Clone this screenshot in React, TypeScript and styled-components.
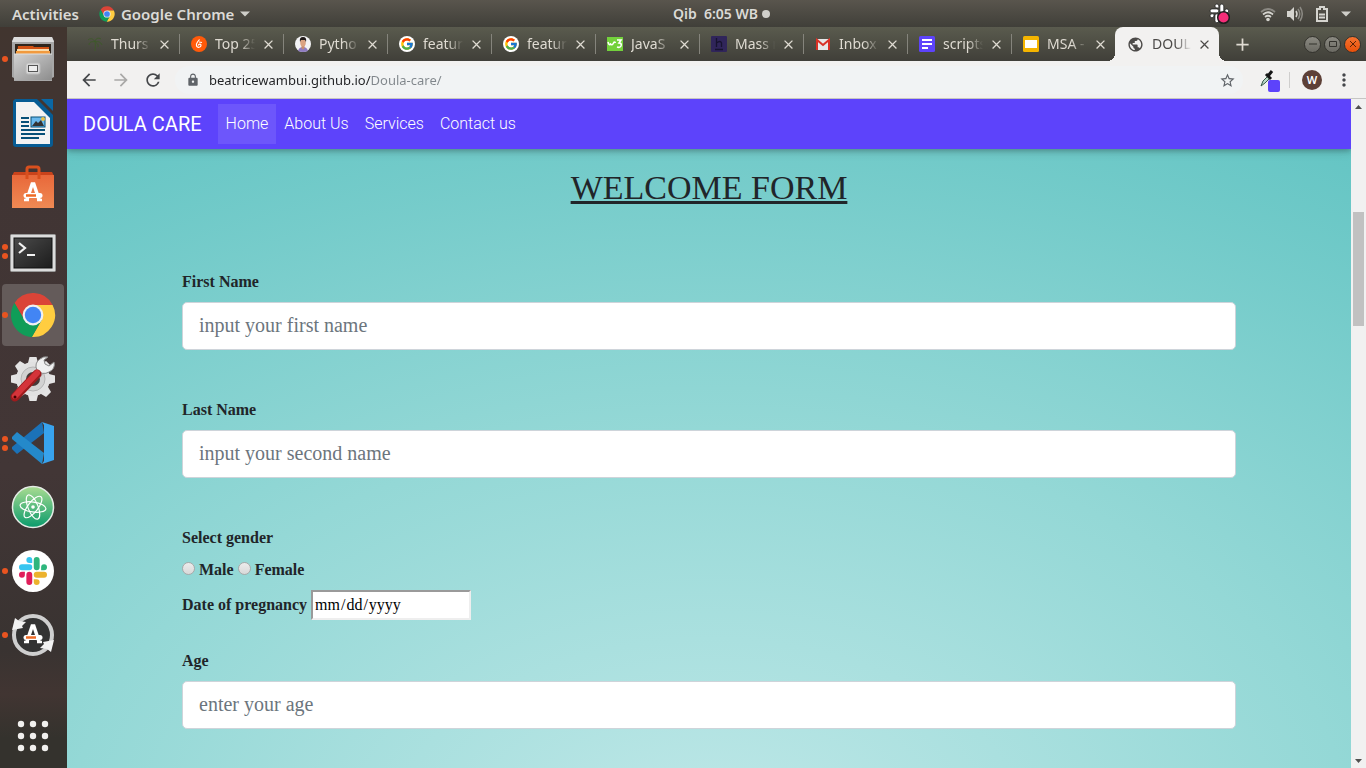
import React from "react";
import styled, { createGlobalStyle } from "styled-components";
import { FcGoogle } from "react-icons/fc";
import { MdArrowBack, MdArrowForward, MdRefresh, MdLock, MdStarBorder, MdMoreVert, MdPublic, MdClose, MdAdd } from "react-icons/md";

const ui = '"Noto Sans", "Open Sans", sans-serif';
const serif = '"Liberation Serif", "Times New Roman", serif';

const GlobalStyle = createGlobalStyle`
  *, *::before, *::after { box-sizing: border-box; }
  body { margin: 0; background: #3f3535; font-family: ${ui}; }
  button { border: 0; padding: 0; background: none; color: inherit; font: inherit; }
  svg { display: block; flex: none; }
`;

/* ---------- desktop shell ---------- */

const Desktop = styled.div`
  display: grid;
  grid-template: auto minmax(0, 1fr) / 67px minmax(0, 1fr);
  height: 100vh;
  overflow: hidden;
`;

const TopBar = styled.header`
  grid-column: 1 / -1;
  display: grid;
  grid-template-columns: 1fr auto 1fr;
  align-items: center;
  height: 27px;
  padding: 0 15px 0 12px;
  background: linear-gradient(#59554d, #403f39);
  color: #dbdad6;
  font-size: 15px;
  font-weight: 600;
`;

const TopGroup = styled.div<{ $gap: number; $end?: boolean }>`
  display: flex;
  align-items: center;
  justify-content: ${(p) => (p.$end ? "flex-end" : "flex-start")};
  gap: ${(p) => p.$gap}px;
`;

const TopButton = styled.button`
  display: flex;
  align-items: center;
  gap: 6px;
  line-height: 20px;
  white-space: nowrap;
`;

const ActivitiesButton = styled(TopButton)`
  margin-right: 14px;
`;

const Clock = styled(TopButton)`
  margin-left: 80px;
  gap: 4px;
  font-size: 14px;
  white-space: pre;
`;

const StatusDot = styled.span`
  width: 8px;
  height: 8px;
  border-radius: 50%;
  background: #cfcec9;
`;

const SlackStatus = styled.button`
  margin-right: 18px;
`;

const Dock = styled.nav`
  display: flex;
  flex-direction: column;
  min-height: 0;
  background: linear-gradient(#41352f 0, #413534 20%, #423636 60%, #393331 84%, #413532 90%, #34322d 96%);
`;

const DockItem = styled.button<{ $active?: boolean }>`
  display: grid;
  grid-template-columns: 6px 50px 6px;
  align-items: center;
  justify-items: center;
  width: 62px;
  height: 62px;
  margin: 1px 2px;
  border-radius: 4px;
  background: ${(p) => (p.$active ? "#645b5a" : "transparent")};
`;

const DockSpacer = styled.div`
  flex: 1;
`;

const Dots = styled.span`
  display: grid;
  gap: 3px;
  i {
    width: 6px;
    height: 6px;
    border-radius: 50%;
    background: #e95420;
  }
`;

/* ---------- browser ---------- */

const Browser = styled.section`
  display: flex;
  flex-direction: column;
  min-width: 0;
  min-height: 0;
`;

const TabStrip = styled.div`
  display: flex;
  align-items: center;
  height: 34px;
  flex: none;
  padding: 0 5px 0 8px;
  background: linear-gradient(#5a5b4e, #403f39);
`;

const TabItem = styled.div<{ $active?: boolean; $last?: boolean }>`
  position: relative;
  display: flex;
  align-items: center;
  flex: 0 1 104px;
  min-width: 0;
  height: 34px;
  padding: 0 7px 0 12px;
  border-radius: 8px 8px 0 0;
  color: ${(p) => (p.$active ? "#4c4a48" : "#dfdbd2")};
  background: ${(p) => (p.$active ? "#f2f1f0" : "transparent")};
  &::before {
    content: "";
    display: ${(p) => (p.$active ? "block" : "none")};
    position: absolute;
    right: -8px;
    bottom: 0;
    left: -8px;
    height: 8px;
    background:
      radial-gradient(circle at 0 0, transparent 8px, #f2f1f0 8px) left / 8px 8px no-repeat,
      radial-gradient(circle at 100% 0, transparent 8px, #f2f1f0 8px) right / 8px 8px no-repeat;
  }
  &::after {
    content: "";
    flex: none;
    width: 1px;
    height: 20px;
    margin-right: -8px;
    margin-left: 7px;
    background: ${(p) => (p.$active || p.$last ? "transparent" : "#85847c")};
  }
`;

const TabTitle = styled.button`
  flex: 1;
  min-width: 0;
  margin: 0 4px 0 8px;
  overflow: hidden;
  text-align: left;
  white-space: nowrap;
  font-size: 14px;
  line-height: 20px;
  mask-image: linear-gradient(90deg, #000 60%, transparent 98%);
`;

const IconButton = styled.button<{ $size: number; $color?: string }>`
  display: grid;
  place-items: center;
  flex: none;
  width: ${(p) => p.$size}px;
  height: ${(p) => p.$size}px;
  color: ${(p) => p.$color || "inherit"};
`;

const GoogleBadge = styled.span`
  display: grid;
  place-items: center;
  width: 16px;
  height: 16px;
  border-radius: 50%;
  background: #fff;
`;

const WindowControls = styled.div`
  display: flex;
  gap: 3px;
  margin-left: auto;
`;

const WindowButton = styled.button<{ $close?: boolean }>`
  display: grid;
  place-items: center;
  width: 17px;
  height: 17px;
  border: 1px solid #34332e;
  border-radius: 50%;
  background: ${(p) => (p.$close ? "linear-gradient(#f7732f, #e9500a)" : "linear-gradient(#8b8a82, #6b6a63)")};
`;

const Toolbar = styled.div`
  display: flex;
  align-items: center;
  height: 38px;
  flex: none;
  padding: 0 12px 0 6px;
  border-bottom: 1px solid #c6c5c4;
  background: #f2f1f0;
`;

const ToolButtons = styled.div`
  display: flex;
`;

const Omnibox = styled.div`
  display: flex;
  align-items: center;
  flex: 1;
  min-width: 0;
  height: 28px;
  margin: 0 14px 0 6px;
  padding: 0 8px 0 11px;
  border-radius: 14px;
  background: #f1f3f4;
  color: #5f6368;
`;

const Url = styled.input`
  flex: 1;
  min-width: 0;
  height: 20px;
  margin-left: 9px;
  padding: 0;
  border: 0;
  outline: 0;
  font-family: ${ui};
  font-size: 13px;
  color: transparent;
  background: linear-gradient(90deg, #202124 162px, #80868b 162px);
  background-clip: text;
`;

const Divider = styled.span`
  width: 1px;
  height: 16px;
  margin: 0 12px 0 8px;
  background: #cfcecd;
`;

const Avatar = styled.button`
  width: 20px;
  height: 20px;
  margin-right: 12px;
  border-radius: 50%;
  background: #5d4037;
  color: #fff;
  font-size: 11px;
  font-weight: 600;
  line-height: 20px;
`;

/* ---------- web page ---------- */

const Viewport = styled.div`
  display: flex;
  flex: 1;
  min-height: 0;
`;

const Page = styled.div`
  flex: 1;
  min-width: 0;
  overflow: hidden;
  background: radial-gradient(ellipse 100% 125% at 50% 112%, #c0e8e8 0%, #94d8d6 50%, #62c4c3 100%);
`;

const NavBar = styled.nav`
  display: flex;
  align-items: center;
  height: 50px;
  padding: 0 16px;
  background: #5d43fb;
  box-shadow: 0 2px 5px rgba(0, 0, 0, 0.2), 0 2px 10px rgba(0, 0, 0, 0.16);
  font-family: Roboto, sans-serif;
`;

const Brand = styled.a`
  margin-right: 16px;
  color: #fff;
  font-size: 20px;
  line-height: 30px;
  text-decoration: none;
`;

const NavLink = styled.a<{ $active?: boolean }>`
  padding: 8px;
  background: ${(p) => (p.$active ? "rgba(255, 255, 255, 0.1)" : "transparent")};
  color: #fff;
  font-size: 16px;
  font-weight: 300;
  line-height: 24px;
  text-decoration: none;
`;

const WelcomeForm = styled.form`
  padding: 16px 115px 48px;
  color: #212529;
  font-family: ${serif};
  font-size: 16px;
  font-weight: 700;
  line-height: 24px;
`;

const Heading = styled.h1`
  margin: 0 0 60px;
  font-size: 34px;
  font-weight: 400;
  line-height: 45px;
  text-align: center;
  text-decoration: underline;
  text-decoration-thickness: 3px;
`;

const Field = styled.div`
  display: flex;
  flex-direction: column;
  gap: 8px;
  margin-bottom: 48px;
`;

const TextInput = styled.input`
  height: 48px;
  padding: 8px 16px 10px;
  border: 1px solid #ced4da;
  border-radius: 5px;
  background: #fff;
  color: #495057;
  font-family: ${serif};
  font-size: 20px;
  &::placeholder { color: #6c757d; opacity: 1; }
`;

const GenderGroup = styled.fieldset`
  margin: 0 0 8px;
  padding: 0;
  border: 0;
  legend { margin-bottom: 8px; padding: 0; }
`;

const Choices = styled.div`
  display: flex;
  gap: 4px;
  label { display: flex; gap: 4px; }
`;

const Radio = styled.input`
  appearance: none;
  width: 13px;
  height: 13px;
  margin: 4px 0 0;
  border: 1px solid #a9a9a9;
  border-radius: 50%;
  background: linear-gradient(#ececec, #d9d9d9);
`;

const DateRow = styled.div`
  display: flex;
  align-items: center;
  gap: 4px;
  margin-bottom: 29px;
`;

const DateInput = styled.input`
  width: 160px;
  height: 30px;
  padding: 1px;
  border: 2px solid;
  border-color: #9a9a9a #eee #eee #9a9a9a;
  background: #fff;
  color: #000;
  font-family: ${serif};
  font-size: 16px;
  &::-webkit-calendar-picker-indicator { display: none; }
  &::-webkit-datetime-edit-fields-wrapper { padding: 0; }
`;

const ScrollBar = styled.div`
  display: flex;
  flex-direction: column;
  align-items: center;
  justify-content: space-between;
  width: 15px;
  background: #f1f1f1;
`;

const ScrollTrack = styled.div`
  display: flex;
  flex: 1;
  flex-direction: column;
  width: 11px;
  &::before { content: ""; flex: 98 0 0; }
  &::after { content: ""; flex: 427 0 0; }
`;

const ScrollThumb = styled.div`
  flex: 114 0 0;
  background: #c1c1c1;
`;

/* ---------- icons ---------- */

const ChromeIcon = ({ size }: { size: number }) => (
  <svg width={size} height={size} viewBox="1 1 46 46">
    <path fill="#db4437" d="M5.54 12.03A22 22 0 0 1 43.6 14H24L15.34 29Z" />
    <path fill="#ffcd40" d="M43.6 14A22 22 0 0 1 22.86 45.97L32.66 29 24 14Z" />
    <path fill="#0f9d58" d="M22.86 45.97A22 22 0 0 1 5.54 12.03L15.34 29H32.66Z" />
    <circle cx="24" cy="24" r="10.4" fill="#f1f1f1" />
    <circle cx="24" cy="24" r="8.2" fill="#4285f4" />
  </svg>
);

const slackArm =
  "M5.04 15.17a2.52 2.52 0 1 1-2.52-2.52h2.52zM6.31 15.17a2.52 2.52 0 0 1 5.04 0v6.31a2.52 2.52 0 0 1-5.04 0z";

const SlackMark = ({ colors }: { colors: string[] }) => (
  <>
    {colors.map((c, i) => (
      <path key={i} d={slackArm} fill={c} transform={`rotate(${i * 90} 12 12)`} />
    ))}
  </>
);

/* Compass-like emblem shared by the software and updater icons, centred on 0,0. */
const Emblem = () => (
  <g fill="none" stroke="#fff">
    <path d="M-6 7.500-.8-8H.8L6 7.500" strokeWidth="3.500" />
    <path d="M-9 8h5M4 8h5" strokeWidth="2.500" />
    <path d="M-7 3.500H7" strokeWidth="5" strokeLinecap="round" />
    <path d="M-7 3.500H3" stroke="#ee6a25" strokeWidth="2.500" />
  </g>
);

const Caret = () => (
  <svg width="10" height="6" viewBox="0 0 10 6"><path d="M0 .5h10L5 5.500Z" fill="#cfcec9" /></svg>
);

const FilesIcon = () => (
  <svg width="44" height="46" viewBox="0 0 44 46">
    <defs><linearGradient id="cab" x2="1" y2="1"><stop stopColor="#d2d2d2" /><stop offset="1" stopColor="#8d8d8d" /></linearGradient></defs>
    <path d="M3 1h38l2 4v36l-2 1v3H3v-3l-2-1V5Z" fill="#a7a7a7" />
    <path d="M3 1h38l2 5H1Z" fill="#dcdcdc" />
    <path d="M4 8h36v11H4Z" fill="#30261d" />
    <path d="M7 10h15l1 1h15v8H6Z" fill="#d15113" />
    <path d="M6 13h32v2H6Z" fill="#f8dcae" /><path d="M5 15h34v4H5Z" fill="#f19a3e" />
    <path d="M3 18h38v26H3Z" fill="url(#cab)" /><path d="M3 18h38" stroke="#e0e0e0" />
    <rect x="15" y="27" width="14" height="11" rx="2" fill="#d8d8d8" stroke="#bbb" />
    <rect x="17.500" y="29.500" width="9" height="6" fill="#eee" stroke="#555" />
  </svg>
);

const WriterIcon = () => (
  <svg width="42" height="50" viewBox="0 0 42 50">
    <path d="M3 1h22l16 16v29a3 3 0 0 1-3 3H4a3 3 0 0 1-3-3V3Z" fill="#075c94" />
    <path d="M4 4h18l16 16v26H4Z" fill="#f3f3f3" />
    <path d="M29 1h12v12Z" fill="#0a67a4" />
    <path d="M9 20h8M9 24h8M9 28h8M9 32h24M9 36h24M9 40h18" stroke="#075078" strokeWidth="2" />
    <rect x="19" y="19" width="14" height="10" fill="#69b8ec" stroke="#075078" />
    <circle cx="31" cy="21" r="2" fill="#e9c044" />
    <path d="m20 28 4-5 2 2 3-3 3 6Z" fill="#333" />
  </svg>
);

const SoftwareIcon = () => (
  <svg width="44" height="46" viewBox="0 0 44 46">
    <defs><linearGradient id="bag" x2="0" y2="1"><stop stopColor="#e8683a" /><stop offset="1" stopColor="#f08a54" /></linearGradient></defs>
    <path d="M3 8h38l2 4H1Z" fill="#c9431b" />
    <path d="M1 11h42v33H1Z" fill="url(#bag)" />
    <path d="M16 15V5q0-2 2-2h8q2 0 2 2v10" fill="none" stroke="#d9501e" strokeWidth="3" />
    <g transform="translate(22 28)"><Emblem /></g>
  </svg>
);

const TerminalIcon = () => (
  <svg width="46" height="42" viewBox="0 -4 46 42">
    <defs><linearGradient id="term" x2="1" y2="1"><stop stopColor="#4b4b4b" /><stop offset=".5" stopColor="#333" /><stop offset="1" stopColor="#1c1c1c" /></linearGradient></defs>
    <rect x=".5" y=".5" width="45" height="37" rx="1" fill="#dcdcdc" stroke="#999" />
    <rect x="4" y="4" width="38" height="30" fill="url(#term)" stroke="#111" />
    <path d="m9 9 6 5-6 5M17 21h8" fill="none" stroke="#f2f2f2" strokeWidth="2.200" />
  </svg>
);

const SettingsIcon = () => (
  <svg width="46" height="46" viewBox="0 0 46 46">
    {[0, 45, 90, 135].map((a) => (
      <path key={a} d="M19.500 1h7l2 8v28l-2 8h-7l-2-8V9Z" fill="#e4e4e4" transform={`rotate(${a} 23 23)`} />
    ))}
    <circle cx="23" cy="23" r="17" fill="#e1e1e1" />
    <circle cx="23" cy="23" r="12" fill="#d2d2d2" stroke="#b5b5b5" />
    <circle cx="23" cy="23" r="7" fill="#453a39" />
    <path d="m27 20 8-9" stroke="#b5b5b5" strokeWidth="7" />
    <path d="M30 3a8 8 0 0 0-3 11 9 9 0 0 0 12 2 8 8 0 0 0 5-10l-5 4-4-2-1-4 4-3a9 9 0 0 0-8 2Z" fill="#f0f0f0" stroke="#888" />
    <path d="M5 41 27 18" stroke="#9e1b1d" strokeWidth="9" strokeLinecap="round" />
    <path d="M5 40 27 17" stroke="#d4343a" strokeWidth="6" strokeLinecap="round" />
    <circle cx="5" cy="41" r="1.500" fill="#400" />
  </svg>
);

const CodeIcon = () => (
  <svg width="44" height="44" viewBox="0 0 44 44">
    <path d="M1 28v-2L31 1l2 11L6 33Z" fill="#1b72b8" />
    <path d="m1 16 5-5 27 21-2 11L1 18Z" fill="#2489ca" />
    <path d="m31 1 12 4v34l-12 4 2-3V4Z" fill="#38a3ee" />
  </svg>
);

const AtomIcon = () => (
  <svg width="44" height="44" viewBox="0 0 44 44">
    <defs><linearGradient id="atom" x2="0" y2="1"><stop stopColor="#a9dc91" /><stop offset="1" stopColor="#0a9b6c" /></linearGradient></defs>
    <circle cx="22" cy="22" r="20.500" fill="url(#atom)" stroke="#e5ece6" strokeWidth="1.500" />
    <g fill="none" stroke="#fff" strokeWidth="1.200">
      <ellipse cx="22" cy="22" rx="13" ry="5" transform="rotate(8 22 22)" />
      <ellipse cx="22" cy="22" rx="13" ry="5" transform="rotate(68 22 22)" />
      <ellipse cx="22" cy="22" rx="13" ry="5" transform="rotate(128 22 22)" />
    </g>
    <circle cx="22" cy="22" r="1.800" fill="#fff" />
  </svg>
);

const SlackIcon = () => (
  <svg width="42" height="42" viewBox="0 0 42 42">
    <circle cx="21" cy="21" r="21" fill="#fff" />
    <g transform="translate(7 7) scale(1.167)"><SlackMark colors={["#e01e5a", "#36c5f0", "#2eb67d", "#ecb22e"]} /></g>
  </svg>
);

const UpdaterIcon = () => (
  <svg width="44" height="46" viewBox="0 0 44 46">
    <circle cx="22" cy="23" r="19" fill="#333" stroke="#cfcfcf" strokeWidth="4" />
    <path d="M1 18 4 6l4 3 7 1-4 4 1 2Z" fill="#f2f2f2" />
    <path d="m43 28-3 12-4-3-7-1 4-4-1-2Z" fill="#f2f2f2" />
    <g transform="translate(22 22)"><Emblem /></g>
  </svg>
);

const AppsIcon = () => (
  <svg width="32" height="32" viewBox="0 0 32 32" fill="#f1f0ee">
    {[4, 16, 28].flatMap((x) => [4, 16, 28].map((y) => <circle key={`${x}-${y}`} cx={x} cy={y} r="3.200" />))}
  </svg>
);

const palm = (
  <svg width="16" height="16" viewBox="0 0 16 16" fill="none" stroke="#3f5a2b" strokeWidth="1">
    <path d="M8 15c0-4 1-5 0-8M8 6C6 2 3 2 1 4M8 6C5 5 2 6 2 9M8 6c0-3 3-5 6-3M8 6c3-1 6 0 7 3M8 6c2 1 4 3 3 5" />
  </svg>
);
const orangeDisc = (
  <svg width="16" height="16" viewBox="0 0 16 16"><circle cx="8" cy="8" r="8" fill="#ff5a0a" />
    <path d="M8.500 3.500 6.500 6C5 8 5 9 5.500 10c1 2 4.500 1.500 4.500-.5S8 8 7 9.500M8 6l3 .5" fill="none" stroke="#fff" strokeWidth="1.200" /></svg>
);
const portrait = (
  <svg width="16" height="16" viewBox="0 0 16 16"><circle cx="8" cy="8" r="8" fill="#f3f3f5" />
    <path d="M3 15q1-4 5-4t5 4q-5 2-10 0Z" fill="#8f7cc0" /><path d="M6.500 9h3v3L8 13.500 6.500 12Z" fill="#c98d6c" />
    <ellipse cx="8" cy="6.500" rx="2.800" ry="4" fill="#dba382" /><path d="M5 6Q4 1 8 1t3 5L10 4H6Z" fill="#211a19" /></svg>
);
const google = <GoogleBadge><FcGoogle size={14} /></GoogleBadge>;
const schools = (
  <svg width="16" height="14" viewBox="0 0 16 14"><path d="M0 0h16v14H0Z" fill="#73d13c" />
    <path d="M1 5q1 4 2.500 2Q5 9 6.500 6q1-2 2 0M10 3h4l-2 3q3 0 2 3-1 2-4 1" fill="none" stroke="#fff" strokeWidth="1.600" /></svg>
);
const purpleH = (
  <svg width="16" height="16" viewBox="0 0 16 16"><rect width="16" height="16" rx="1" fill="#30255a" />
    <path d="M5.500 2v9M5.500 7q4-3 5 0v4M4 13.500h8" fill="none" stroke="#17132f" strokeWidth="1.300" /></svg>
);
const gmail = (
  <svg width="16" height="16" viewBox="0 0 16 16"><path d="M1 3h14v11H1Z" fill="#e7e7e7" />
    <path d="M2 14V4l6 5 6-5v10" fill="none" stroke="#d93025" strokeWidth="2" /></svg>
);
const docs = (
  <svg width="16" height="16" viewBox="0 0 16 16"><rect width="16" height="16" rx="1.500" fill="#5d43fb" />
    <path d="M3 4h10M3 8h10M3 12h6" stroke="#fff" strokeWidth="2" /></svg>
);
const slides = (
  <svg width="16" height="16" viewBox="0 0 16 16"><rect width="16" height="16" rx="1.500" fill="#f4b400" /><path d="M2 4h12v8H2Z" fill="#fff" /></svg>
);

const tabs = [
  { title: "Thurs", icon: palm },
  { title: "Top 25", icon: orangeDisc },
  { title: "Pytho", icon: portrait },
  { title: "featur", icon: google },
  { title: "featur", icon: google },
  { title: "JavaS", icon: schools },
  { title: "Mass r", icon: purpleH },
  { title: "Inbox", icon: gmail },
  { title: "scripts", icon: docs },
  { title: "MSA -", icon: slides },
  { title: "DOUL", icon: <MdPublic size={17} />, active: true },
];

const dockApps = [
  { name: "Files", icon: <FilesIcon />, windows: 1 },
  { name: "Writer", icon: <WriterIcon />, windows: 0 },
  { name: "Software", icon: <SoftwareIcon />, windows: 0 },
  { name: "Terminal", icon: <TerminalIcon />, windows: 2 },
  { name: "Chrome", icon: <ChromeIcon size={46} />, windows: 1, active: true },
  { name: "Settings", icon: <SettingsIcon />, windows: 0 },
  { name: "Code", icon: <CodeIcon />, windows: 2 },
  { name: "Atom", icon: <AtomIcon />, windows: 0 },
  { name: "Slack", icon: <SlackIcon />, windows: 1 },
  { name: "Updater", icon: <UpdaterIcon />, windows: 1 },
];

const TextField = ({ id, label, placeholder }: { id: string; label: string; placeholder: string }) => (
  <Field>
    <label htmlFor={id}>{label}</label>
    <TextInput id={id} type="text" placeholder={placeholder} />
  </Field>
);

const ScrollArrow = ({ down }: { down?: boolean }) => (
  <IconButton $size={15} aria-label={down ? "Scroll down" : "Scroll up"}>
    <svg width="7" height="4" viewBox="0 0 7 4"><path d={down ? "M0 0h7L3.500 4Z" : "M0 4h7L3.500 0Z"} fill="#505050" /></svg>
  </IconButton>
);

export default function App() {
  return (
    <>
      <GlobalStyle />
      <Desktop>
        <TopBar>
          <TopGroup $gap={6}>
            <ActivitiesButton>Activities</ActivitiesButton>
            <TopButton><ChromeIcon size={16} />Google Chrome<Caret /></TopButton>
          </TopGroup>
          <Clock>{"Qib  6:05 WB"}<StatusDot /></Clock>
          <TopGroup $gap={11} $end>
            <SlackStatus aria-label="Slack">
              <svg width="22" height="22" viewBox="0 0 22 22">
                <g transform="translate(1 1) scale(.78)" stroke="#222" strokeWidth="1"><SlackMark colors={["#fff", "#fff", "#fff", "#fff"]} /></g>
                <circle cx="14.500" cy="14.500" r="5.800" fill="#f62d78" stroke="#1e1e1e" strokeWidth="1.500" />
              </svg>
            </SlackStatus>
            <svg width="16" height="16" viewBox="0 0 16 16" fill="none" strokeWidth="1.700">
              <path d="M1 6q7-6 14 0" stroke="#8b8983" /><path d="M3 8.500q5-4.500 10 0M5 11q3-2.500 6 0" stroke="#d5d4cf" />
              <circle cx="8" cy="13.500" r="1.800" fill="#d5d4cf" />
            </svg>
            <svg width="16" height="16" viewBox="0 0 16 16" fill="none" strokeWidth="1.500">
              <path d="M0 5h3l4-4v14l-4-4H0Z" fill="#d5d4cf" /><path d="M9 5q2 3 0 6" stroke="#d5d4cf" />
              <path d="M11 3q3.500 5 0 10M13 1q4.500 7 0 14" stroke="#8b8983" />
            </svg>
            <svg width="16" height="18" viewBox="0 0 16 18" fill="none" stroke="#d5d4cf" strokeWidth="2">
              <path d="M3 4h3V2h4v2h3v12H3Z" /><path d="M5 9.500h6M5 12.500h6" />
            </svg>
            <Caret />
          </TopGroup>
        </TopBar>

        <Dock aria-label="Dock">
          {dockApps.map((a) => (
            <DockItem key={a.name} $active={a.active} aria-label={a.name}>
              <Dots>{Array.from({ length: a.windows }, (_, i) => <i key={i} />)}</Dots>
              {a.icon}
            </DockItem>
          ))}
          <DockSpacer />
          <DockItem aria-label="Show applications"><Dots /><AppsIcon /></DockItem>
        </Dock>

        <Browser>
          <TabStrip>
            {tabs.map((t, i) => (
              <TabItem key={i} $active={t.active} $last={i === tabs.length - 2}>
                {t.icon}
                <TabTitle>{t.title}</TabTitle>
                <IconButton $size={16} aria-label="Close tab"><MdClose size={15} /></IconButton>
              </TabItem>
            ))}
            <IconButton $size={46} $color="#dfdbd2" aria-label="New tab"><MdAdd size={21} /></IconButton>
            <WindowControls>
              <WindowButton aria-label="Minimize"><svg width="8" height="8"><path d="M0 4h8" stroke="#33322d" /></svg></WindowButton>
              <WindowButton aria-label="Maximize"><svg width="8" height="8"><path d="M.5 1.500h7v5h-7Z" stroke="#33322d" fill="none" /></svg></WindowButton>
              <WindowButton $close aria-label="Close"><svg width="8" height="8"><path d="m1 1 6 6M7 1 1 7" stroke="#5b2307" /></svg></WindowButton>
            </WindowControls>
          </TabStrip>

          <Toolbar>
            <ToolButtons>
              <IconButton $size={32} $color="#45474a" aria-label="Back"><MdArrowBack size={20} /></IconButton>
              <IconButton $size={32} $color="#a9a8a7" aria-label="Forward"><MdArrowForward size={20} /></IconButton>
              <IconButton $size={32} $color="#45474a" aria-label="Reload"><MdRefresh size={20} /></IconButton>
            </ToolButtons>
            <Omnibox>
              <MdLock size={14} />
              <Url aria-label="Address" defaultValue="beatricewambui.github.io/Doula-care/" />
              <IconButton $size={16} aria-label="Bookmark"><MdStarBorder size={17} /></IconButton>
            </Omnibox>
            <IconButton $size={24} aria-label="Color picker">
              <svg width="24" height="24" viewBox="0 0 24 24">
                <path d="m4 18 2-5 5-5 2 2-5 5Z" fill="#b9d8c8" stroke="#35594a" /><path d="m9 6 5 5M11 8l4-5" stroke="#151515" strokeWidth="3" />
                <rect x="11" y="12" width="12" height="12" rx="2" fill="#5d43fb" />
              </svg>
            </IconButton>
            <Divider />
            <Avatar aria-label="Profile">W</Avatar>
            <IconButton $size={20} $color="#45474a" aria-label="Menu"><MdMoreVert size={20} /></IconButton>
          </Toolbar>

          <Viewport>
            <Page>
              <NavBar>
                <Brand href="#">DOULA CARE</Brand>
                <NavLink href="#" $active>Home</NavLink>
                <NavLink href="#about">About Us</NavLink>
                <NavLink href="#services">Services</NavLink>
                <NavLink href="#contact">Contact us</NavLink>
              </NavBar>
              <WelcomeForm>
                <Heading>WELCOME FORM</Heading>
                <TextField id="first" label="First Name" placeholder="input your first name" />
                <TextField id="last" label="Last Name" placeholder="input your second name" />
                <GenderGroup>
                  <legend>Select gender</legend>
                  <Choices>
                    <label><Radio type="radio" name="gender" />Male</label>
                    <label><Radio type="radio" name="gender" />Female</label>
                  </Choices>
                </GenderGroup>
                <DateRow>
                  <label htmlFor="date">Date of pregnancy</label>
                  <DateInput id="date" type="date" />
                </DateRow>
                <TextField id="age" label="Age" placeholder="enter your age" />
              </WelcomeForm>
            </Page>
            <ScrollBar>
              <ScrollArrow />
              <ScrollTrack><ScrollThumb /></ScrollTrack>
              <ScrollArrow down />
            </ScrollBar>
          </Viewport>
        </Browser>
      </Desktop>
    </>
  );
}
